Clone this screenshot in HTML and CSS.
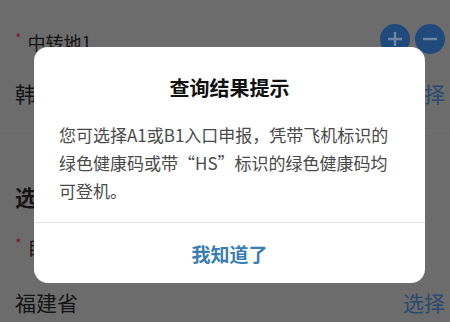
FILE: index.html
```html
<!DOCTYPE html>
<html lang="zh-CN">
<head>
<meta charset="utf-8">
<link rel="stylesheet" href="styles.css">
</head>
<body>
<div class="page">
  <div class="row label-row">
    <span class="label"><span class="star">*</span>中转地1</span>
    <div class="circles">
      <span class="circle"><svg width="30" height="30" viewBox="0 0 30 30"><path d="M15 8v14M8 15h14" stroke="#6f86a2" stroke-width="2.4" fill="none"/></svg></span>
      <span class="circle"><svg width="30" height="30" viewBox="0 0 30 30"><path d="M8 15h14" stroke="#6f86a2" stroke-width="2.4" fill="none"/></svg></span>
    </div>
  </div>
  <div class="row value-row">
    <span class="value">韩国</span>
    <span class="pick">选择</span>
  </div>
  <div class="sep"></div>
  <div class="row section-row">
    <span class="section">选择目的地</span>
  </div>
  <div class="row label-row2">
    <span class="label"><span class="star">*</span>目的地</span>
  </div>
  <div class="row value-row2">
    <span class="value">福建省</span>
    <span class="pick">选择</span>
  </div>
</div>

<div class="overlay">
  <div class="modal">
    <div class="title">查询结果提示</div>
    <div class="body">您可选择A1或B1入口申报，凭带飞机标识的绿色健康码或带“HS”标识的绿色健康码均可登机。</div>
    <div class="divider"></div>
    <div class="action">我知道了</div>
  </div>
</div>
</body>
</html>
```

FILE: styles.css
```css
* { box-sizing: border-box; }
html, body {
  margin: 0;
  padding: 0;
  width: 450px;
  height: 322px;
  overflow: hidden;
  background: #6c6c6c;
  font-family: "Noto Sans CJK SC", "Noto Sans", sans-serif;
}
.page {
  display: flex;
  flex-direction: column;
  padding: 0 5px 0 15px;
  color: #141414;
}
.row {
  display: flex;
  align-items: center;
  justify-content: space-between;
  flex: none;
}
.label-row { height: 56px; padding-top: 28px; }
.label { font-size: 18px; line-height: 28px; display: flex; align-items: flex-start; }
.star { color: #7a1e2a; font-size: 14px; margin-right: 6px; line-height: 20px; }
.circles { display: flex; gap: 5px; margin-top: -6px; }
.circle {
  width: 30px;
  height: 30px;
  border-radius: 50%;
  background: #1f4a7b;
  display: flex;
}
.value-row { height: 74px; }
.value { font-size: 21px; }
.pick { font-size: 21px; color: #2a4a70; }
.sep { height: 1px; background: #737373; margin: 0 -5px 0 -15px; flex: none; }
.section-row { height: 95px; padding-top: 35px; }
.section { font-size: 22px; font-weight: 700; }
.label-row2 { height: 42px; }
.value-row2 { height: 68px; }

.overlay {
  position: fixed;
  inset: 0;
  padding: 47px 0 0 34px;
}
.modal {
  width: 391px;
  height: 236px;
  background: #fff;
  border-radius: 14px;
  display: flex;
  flex-direction: column;
  padding-top: 27px;
}
.title {
  text-align: center;
  font-size: 20px;
  font-weight: 700;
  line-height: 28px;
  color: #111;
}
.body {
  margin-top: 19px;
  padding: 0 25px;
  font-size: 17px;
  line-height: 28px;
  color: #4a4a4a;
  height: 84px;
}
.divider {
  margin-top: 17px;
  height: 1px;
  background: #e3e3e3;
}
.action {
  flex: 1;
  display: flex;
  align-items: center;
  justify-content: center;
  font-size: 19px;
  font-weight: 700;
  color: #3a7db5;
}
```
